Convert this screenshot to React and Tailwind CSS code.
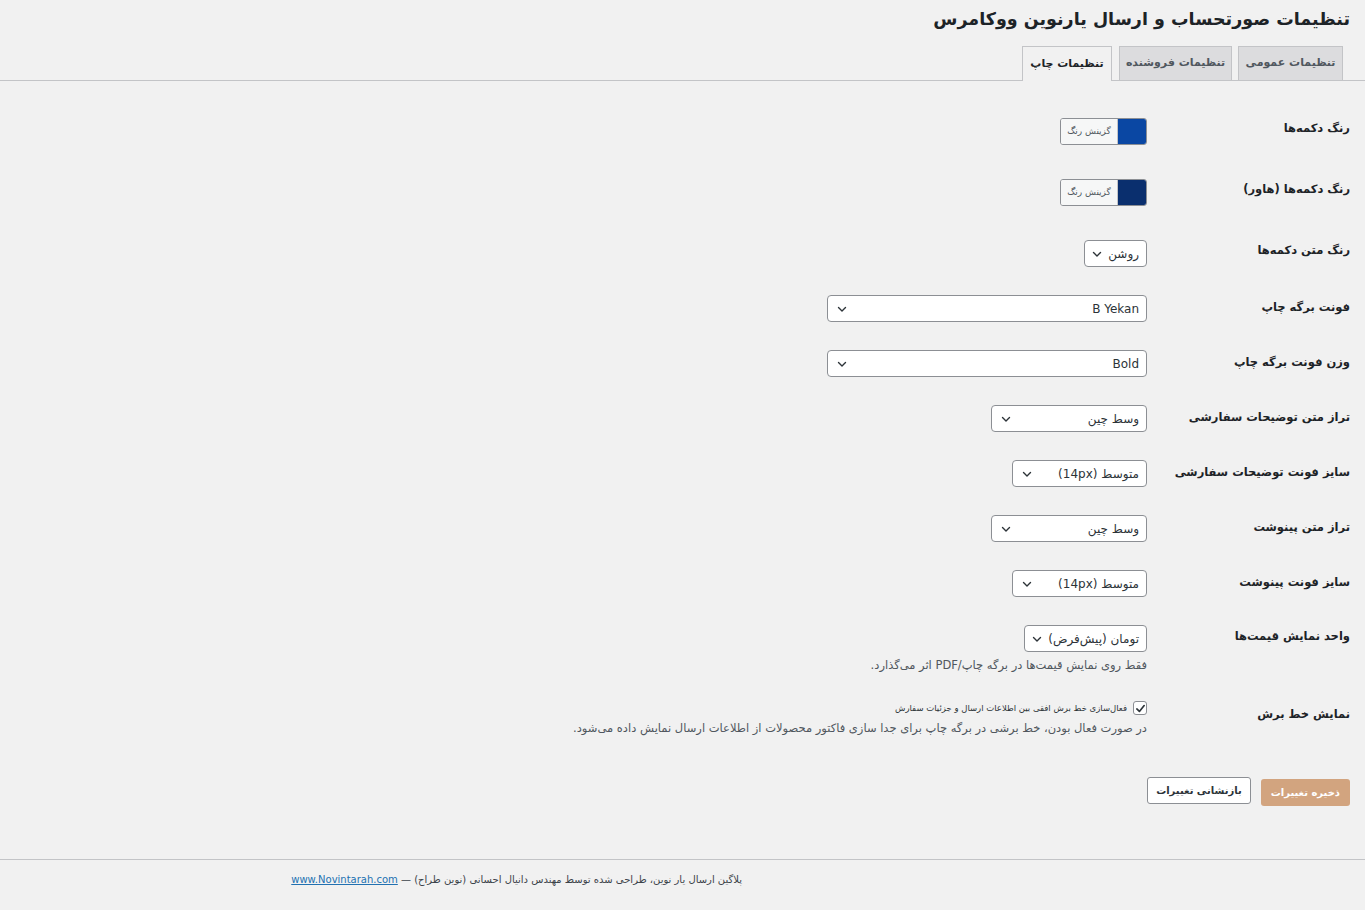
import React from 'react';

const font = { fontFamily: '"DejaVu Sans", "Noto Sans", sans-serif' };

const Chevron = () => (
    <svg width="10" height="10" viewBox="0 0 10 10" className="shrink-0">
        <path d="M1.5 3.5 L5 7 L8.5 3.5" fill="none" stroke="#2c3338" strokeWidth="1.4" strokeLinecap="round" strokeLinejoin="round" />
    </svg>
);

const Select = ({ value, width, auto }) => (
    <div
        className={`h-[27px] bg-white border border-[#8c8f94] rounded-[4px] flex items-center text-[12px] text-[#2c3338] ${auto ? 'gap-[6px] pr-[7px] pl-[7px]' : 'justify-between pr-[7px] pl-[9px]'}`}
        style={auto ? undefined : { width }}
    >
        <span dir="auto" className="leading-none">{value}</span>
        <Chevron />
    </div>
);

const ColorPicker = ({ color }) => (
    <div className="h-[27px] w-[87px] flex border border-[#8c8f94] rounded-[3px] overflow-hidden">
        <div className="w-[28px] h-full" style={{ background: color }} />
        <div className="flex-1 bg-[#f6f7f7] border-r border-[#c3c4c7] flex items-center justify-center text-[9px] text-[#50575e]">
            گزینش رنگ
        </div>
    </div>
);

const Row = ({ label, pt = 14, pb = 14, labelPt = 4, children }) => (
    <div className="flex items-start" style={{ paddingTop: pt, paddingBottom: pb }}>
        <div className="w-[203px] shrink-0 text-[11.5px] font-bold text-[#1d2327]" style={{ paddingTop: labelPt }}>
            {label}
        </div>
        <div className="flex flex-col items-start">{children}</div>
    </div>
);

const App = () => {
    return (
        <div dir="rtl" className="min-h-[910px] bg-[#f1f1f1] text-[#1d2327]" style={font}>
            <div className="pr-[15px]">
                <h1 className="pt-[5px] h-[46px] text-[17.5px] font-bold leading-[28px] text-[#1d2327]">
                    تنظیمات صورتحساب و ارسال یارنوین ووکامرس
                </h1>
            </div>

            {/* tabs */}
            <div className="flex items-end h-[35px] border-b border-[#c3c4c7] pr-[22px]">
                <div className="h-[34px] w-[105px] ml-[6px] flex items-center justify-center border border-[#c3c4c7] border-b-0 bg-[#dcdcde] text-[11px] font-bold text-[#50575e]">
                    تنظیمات عمومی
                </div>
                <div className="h-[34px] w-[113px] ml-[7px] flex items-center justify-center border border-[#c3c4c7] border-b-0 bg-[#dcdcde] text-[11px] font-bold text-[#50575e]">
                    تنظیمات فروشنده
                </div>
                <div className="h-[35px] w-[90px] -mb-px flex items-center justify-center border border-[#c3c4c7] border-b-0 bg-[#f1f1f1] text-[11px] font-bold text-[#1d2327]">
                    تنظیمات چاپ
                </div>
            </div>

            <div className="pr-[15px] pt-[20px]">
                <Row label="رنگ دکمه‌ها" pt={17} pb={17} labelPt={2}>
                    <ColorPicker color="#0a47a3" />
                </Row>
                <Row label="رنگ دکمه‌ها (هاور)" pt={17} pb={17} labelPt={2}>
                    <ColorPicker color="#0a2f6e" />
                </Row>
                <Row label="رنگ متن دکمه‌ها" pt={17} pb={14} labelPt={2}>
                    <Select value="روشن" auto />
                </Row>
                <Row label="فونت برگه چاپ">
                    <Select value="B Yekan" width={320} />
                </Row>
                <Row label="وزن فونت برگه چاپ">
                    <Select value="Bold" width={320} />
                </Row>
                <Row label="تراز متن توضیحات سفارشی">
                    <Select value="وسط چین" width={156} />
                </Row>
                <Row label="سایز فونت توضیحات سفارشی">
                    <Select value="متوسط (14px)" width={135} />
                </Row>
                <Row label="تراز متن پینوشت">
                    <Select value="وسط چین" width={156} />
                </Row>
                <Row label="سایز فونت پینوشت">
                    <Select value="متوسط (14px)" width={135} />
                </Row>
                <Row label="واحد نمایش قیمت‌ها" pb={20} labelPt={3}>
                    <Select value="تومان (پیش‌فرض)" auto />
                    <p className="mt-[5px] text-[11.5px] text-[#50575e] leading-[16px]">
                        فقط روی نمایش قیمت‌ها در برگه چاپ/PDF اثر می‌گذارد.
                    </p>
                </Row>
                <Row label="نمایش خط برش" pt={8} labelPt={5}>
                    <div className="flex items-center gap-[6px]">
                        <div className="w-[14px] h-[14px] bg-white border border-[#8c8f94] rounded-[3px] flex items-center justify-center">
                            <svg width="11" height="11" viewBox="0 0 12 12">
                                <path d="M2 6.5 L4.8 9.2 L10 2.8" fill="none" stroke="#2c3338" strokeWidth="1.8" strokeLinecap="round" strokeLinejoin="round" />
                            </svg>
                        </div>
                        <span className="text-[8.5px] text-[#2c3338]">فعال‌سازی خط برش افقی بین اطلاعات ارسال و جزئیات سفارش</span>
                    </div>
                    <p className="mt-[5px] text-[11.5px] text-[#50575e] leading-[16px]">
                        در صورت فعال بودن، خط برشی در برگه چاپ برای جدا سازی فاکتور محصولات از اطلاعات ارسال نمایش داده می‌شود.
                    </p>
                </Row>

                <div className="flex items-start gap-[10px] pt-[27px]">
                    <div className="mt-[2px] h-[27px] px-[10px] rounded-[3px] bg-[#d2a47f] flex items-center text-[10px] font-bold text-white">
                        ذخیره تغییرات
                    </div>
                    <div className="h-[27px] px-[8px] rounded-[3px] bg-white border border-[#8c8f94] flex items-center text-[10px] font-bold text-[#2c3338]">
                        بازنشانی تغییرات
                    </div>
                </div>
            </div>

            <div className="mt-[53px] border-t border-[#c3c4c7] pt-[12px] pr-[623px] text-[10px] text-[#3c434a]">
                پلاگین ارسال یار نوین، طراحی شده توسط مهندس دانیال احسانی (نوین طراح) —{' '}
                <a className="text-[#2271b1] underline" href="#">www.Novintarah.com</a>
            </div>
        </div>
    );
};

export default App;
